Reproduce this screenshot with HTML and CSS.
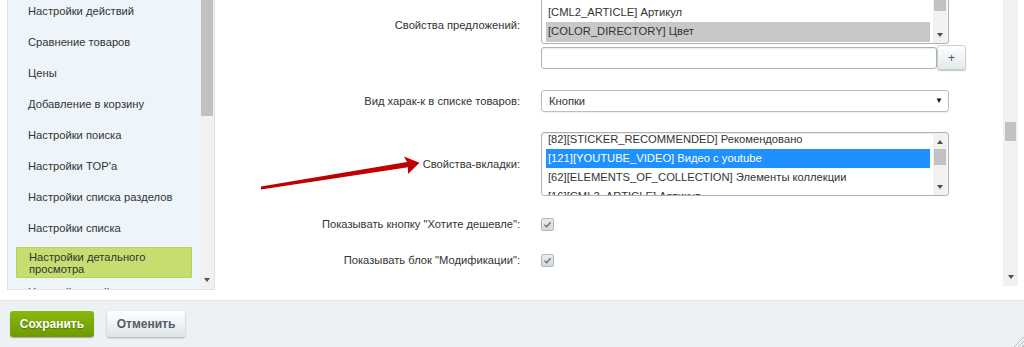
FILE: index.html
```html
<!DOCTYPE html>
<html lang="ru">
<head>
  <meta charset="UTF-8" />
  <title>Настройки детального просмотра</title>
  <link rel="stylesheet" href="styles.css">
</head>
<body>
  <div class="workarea">
    <aside class="sidebar">
      <div class="side-panel">
        <ul class="side-menu">
          <li class="side-item">Настройки действий</li>
          <li class="side-item">Сравнение товаров</li>
          <li class="side-item">Цены</li>
          <li class="side-item">Добавление в корзину</li>
          <li class="side-item">Настройки поиска</li>
          <li class="side-item">Настройки TOP'а</li>
          <li class="side-item">Настройки списка разделов</li>
          <li class="side-item">Настройки списка</li>
          <li class="side-item active">Настройки детального просмотра</li>
          <li class="side-item next">Настройки свойств</li>
        </ul>
        <div class="vscroll side-scroll">
          <div class="thumb"></div>
          <span class="arr down"></span>
        </div>
      </div>
    </aside>

    <main class="content">
      <form class="props">
        <label class="prop-name">Свойства предложений:</label>
        <div class="prop-value">
          <div class="listbox offers">
            <ul class="options">
              <li>[CML2_ARTICLE] Артикул</li>
              <li class="sel-grey">[COLOR_DIRECTORY] Цвет</li>
            </ul>
            <div class="vscroll box-scroll">
              <div class="thumb top"></div>
              <span class="arr down"></span>
            </div>
          </div>
          <div class="add-row">
            <input class="text-input" type="text">
            <button class="plus" type="button">+</button>
          </div>
        </div>

        <label class="prop-name">Вид харак-к в списке товаров:</label>
        <div class="prop-value">
          <div class="select">Кнопки<span class="select-arrow">&#9660;</span></div>
        </div>

        <label class="prop-name">Свойства-вкладки:</label>
        <div class="prop-value">
          <div class="listbox tabs">
            <ul class="options">
              <li>[82][STICKER_RECOMMENDED] Рекомендовано</li>
              <li class="sel-blue">[121][YOUTUBE_VIDEO] Видео с youtube</li>
              <li>[62][ELEMENTS_OF_COLLECTION] Элементы коллекции</li>
              <li>[16][CML2_ARTICLE] Артикул</li>
            </ul>
            <div class="vscroll box-scroll">
              <span class="arr up"></span>
              <div class="thumb mid"></div>
              <span class="arr down"></span>
            </div>
          </div>
        </div>

        <label class="prop-name">Показывать кнопку "Хотите дешевле":</label>
        <div class="prop-value">
          <span class="check"><svg viewBox="0 0 13 13" width="13" height="13"><path d="M3.5 6.8 L5.6 8.8 L9.6 4.2" fill="none" stroke="#6b7175" stroke-width="1.4"/></svg></span>
        </div>

        <label class="prop-name">Показывать блок "Модификации":</label>
        <div class="prop-value">
          <span class="check"><svg viewBox="0 0 13 13" width="13" height="13"><path d="M3.5 6.8 L5.6 8.8 L9.6 4.2" fill="none" stroke="#6b7175" stroke-width="1.4"/></svg></span>
        </div>
      </form>

      <!-- стрелка-указатель поверх формы -->
      <svg class="pointer" width="180" height="50" viewBox="246 146 180 50">
        <polygon points="261,186.6 407,162 404,156.5 419.5,162.8 408,174 408,167.2 261,189.6" fill="#c00000"/>
      </svg>
    </main>

    <div class="vscroll page-scroll">
      <div class="thumb"></div>
      <span class="arr down"></span>
    </div>
  </div>

  <footer class="buttons">
    <button class="btn save" type="button">Сохранить</button>
    <button class="btn cancel" type="button">Отменить</button>
    <span class="resize"></span>
  </footer>
</body>
</html>
```

FILE: styles.css
```css
* {
  box-sizing: border-box;
}

body {
  margin: 0;
  width: 1024px;
  height: 347px;
  overflow: hidden;
  font-family: "Liberation Sans", Arial, sans-serif;
  font-size: 11.2px;
  color: #333;
  background: #fff;
  display: flex;
  flex-direction: column;
}

.workarea {
  height: 300px;
  display: flex;
  overflow: hidden;
}

/* Левое меню */
.sidebar {
  width: 215px;
  padding-left: 7px;
  flex-shrink: 0;
}

.side-panel {
  height: 290px;
  display: flex;
  background: #eef5fa;
  border: 1px solid #dde3e7;
  border-top: none;
  overflow: hidden;
}

.side-menu {
  list-style: none;
  margin: -4px 0 0 0;
  padding: 0 8px;
  flex: 1;
}

.side-item {
  height: 31px;
  line-height: 31px;
  padding-left: 12px;
  white-space: nowrap;
}

.side-item.active {
  height: 31px;
  margin-top: 3px;
  padding: 3px 12px 4px;
  line-height: 12px;
  white-space: normal;
  background: #c7dd70;
  border: 1px solid #b9d25c;
  border-radius: 1px;
}

.side-item.next {
  margin-top: -1px;
}

/* Полосы прокрутки */
.vscroll {
  position: relative;
  background: #f1f1f1;
  flex-shrink: 0;
}

.vscroll .thumb {
  background: #c1c1c1;
  margin: 0 1px;
}

.arr {
  display: block;
  width: 0;
  height: 0;
  margin: 0 auto;
  border-left: 3.5px solid transparent;
  border-right: 3.5px solid transparent;
}

.arr.down {
  border-top: 4px solid #505050;
}

.arr.up {
  border-bottom: 4px solid #505050;
}

.side-scroll {
  width: 14px;
  display: flex;
  flex-direction: column;
  justify-content: space-between;
  padding-bottom: 7px;
}

.side-scroll .thumb {
  height: 116px;
}

.page-scroll {
  width: 15px;
  height: 286px;
  margin-right: 6px;
  padding-top: 122px;
}

.page-scroll .thumb {
  height: 19px;
  margin: 0 2px;
}

.page-scroll .arr.down {
  margin-top: 134px;
}

/* Форма */
.content {
  flex: 1;
  position: relative;
}

.props {
  margin: -20px 0 0 0;
  display: grid;
  grid-template-columns: 305px 408px;
  column-gap: 21px;
  row-gap: 20px;
  align-items: center;
}

.prop-name {
  text-align: right;
  line-height: 16px;
}

.listbox {
  height: 64px;
  display: flex;
  border: 1px solid #a9b3b8;
  border-radius: 3px;
  background: #fff;
  overflow: hidden;
  box-shadow: inset 0 1px 1px rgba(0, 0, 0, 0.08);
}

.options {
  list-style: none;
  margin: 3px 3px 0 4px;
  padding: 0;
  flex: 1;
}

.offers .options {
  margin-top: 22px;
}

.tabs .options {
  margin-top: -3px;
}

.options li {
  height: 19px;
  line-height: 19px;
  padding-left: 2px;
  white-space: nowrap;
}

.options .sel-grey {
  background: #c8c8c8;
  height: 20px;
}

.options .sel-blue {
  background: #1e90ff;
  color: #fff;
}

.box-scroll {
  width: 14px;
  margin-right: 1px;
  display: flex;
  flex-direction: column;
}

.offers .box-scroll {
  justify-content: space-between;
  padding-bottom: 6px;
}

.offers .thumb.top {
  height: 30px;
}

.tabs .box-scroll {
  padding-top: 7px;
}

.tabs .thumb.mid {
  height: 16px;
  margin-top: 5px;
}

.tabs .arr.down {
  margin-top: 20px;
}

.add-row {
  display: flex;
  align-items: center;
  margin-top: 1px;
  width: 425px;
}

.text-input {
  width: 396px;
  height: 22px;
  margin: 0;
  border: 1px solid #a9b3b8;
  border-radius: 3px;
  box-shadow: inset 0 1px 1px rgba(0, 0, 0, 0.08);
}

.plus {
  width: 29px;
  height: 25px;
  margin: 0;
  padding: 0;
  border: 1px solid #c9d0d4;
  border-radius: 3px;
  background: linear-gradient(#ffffff, #e3e9ec);
  box-shadow: 0 1px 1px rgba(0, 0, 0, 0.25);
  font-family: "Liberation Sans", Arial, sans-serif;
  font-size: 12px;
  color: #555;
}

.select {
  height: 22px;
  line-height: 20px;
  padding-left: 7px;
  display: flex;
  justify-content: space-between;
  border: 1px solid #b5bfc4;
  border-radius: 3px;
  box-shadow: 0 1px 1px rgba(0, 0, 0, 0.06);
}

.select-arrow {
  font-size: 8px;
  color: #111;
  padding-right: 5px;
}

.check {
  display: block;
  width: 13px;
  height: 13px;
  border: 1px solid #b0b9be;
  border-radius: 2px;
  background: linear-gradient(#e8ecee, #d3d9dc);
  line-height: 0;
}

.check svg {
  margin: -1px 0 0 -1px;
}

.pointer {
  position: absolute;
  left: 31px;
  top: 146px;
}

/* Кнопки внизу */
.buttons {
  position: relative;
  flex: 1;
  background: #edf1f3;
  border-top: 1px solid #e3e8eb;
  display: flex;
  align-items: center;
  gap: 13px;
  padding: 0 10px;
}

.btn {
  height: 26px;
  margin: 0;
  border: none;
  border-radius: 3px;
  font-family: "Liberation Sans", Arial, sans-serif;
  font-size: 12px;
  font-weight: bold;
  cursor: pointer;
}

.save {
  width: 84px;
  color: #fff;
  background: linear-gradient(#8ab70c, #6f9a00);
  box-shadow: 0 1px 1px rgba(0, 0, 0, 0.3);
  text-shadow: 0 1px 1px rgba(0, 0, 0, 0.3);
}

.cancel {
  width: 78px;
  color: #535c69;
  background: linear-gradient(#ffffff, #dfe5e8);
  box-shadow: 0 1px 2px rgba(0, 0, 0, 0.3);
}

.resize {
  position: absolute;
  right: 0;
  bottom: 0;
  width: 11px;
  height: 11px;
  background: repeating-linear-gradient(135deg, transparent 0 2px, #b9c0c4 2px 3px);
  clip-path: polygon(100% 0, 100% 100%, 0 100%);
}
```
